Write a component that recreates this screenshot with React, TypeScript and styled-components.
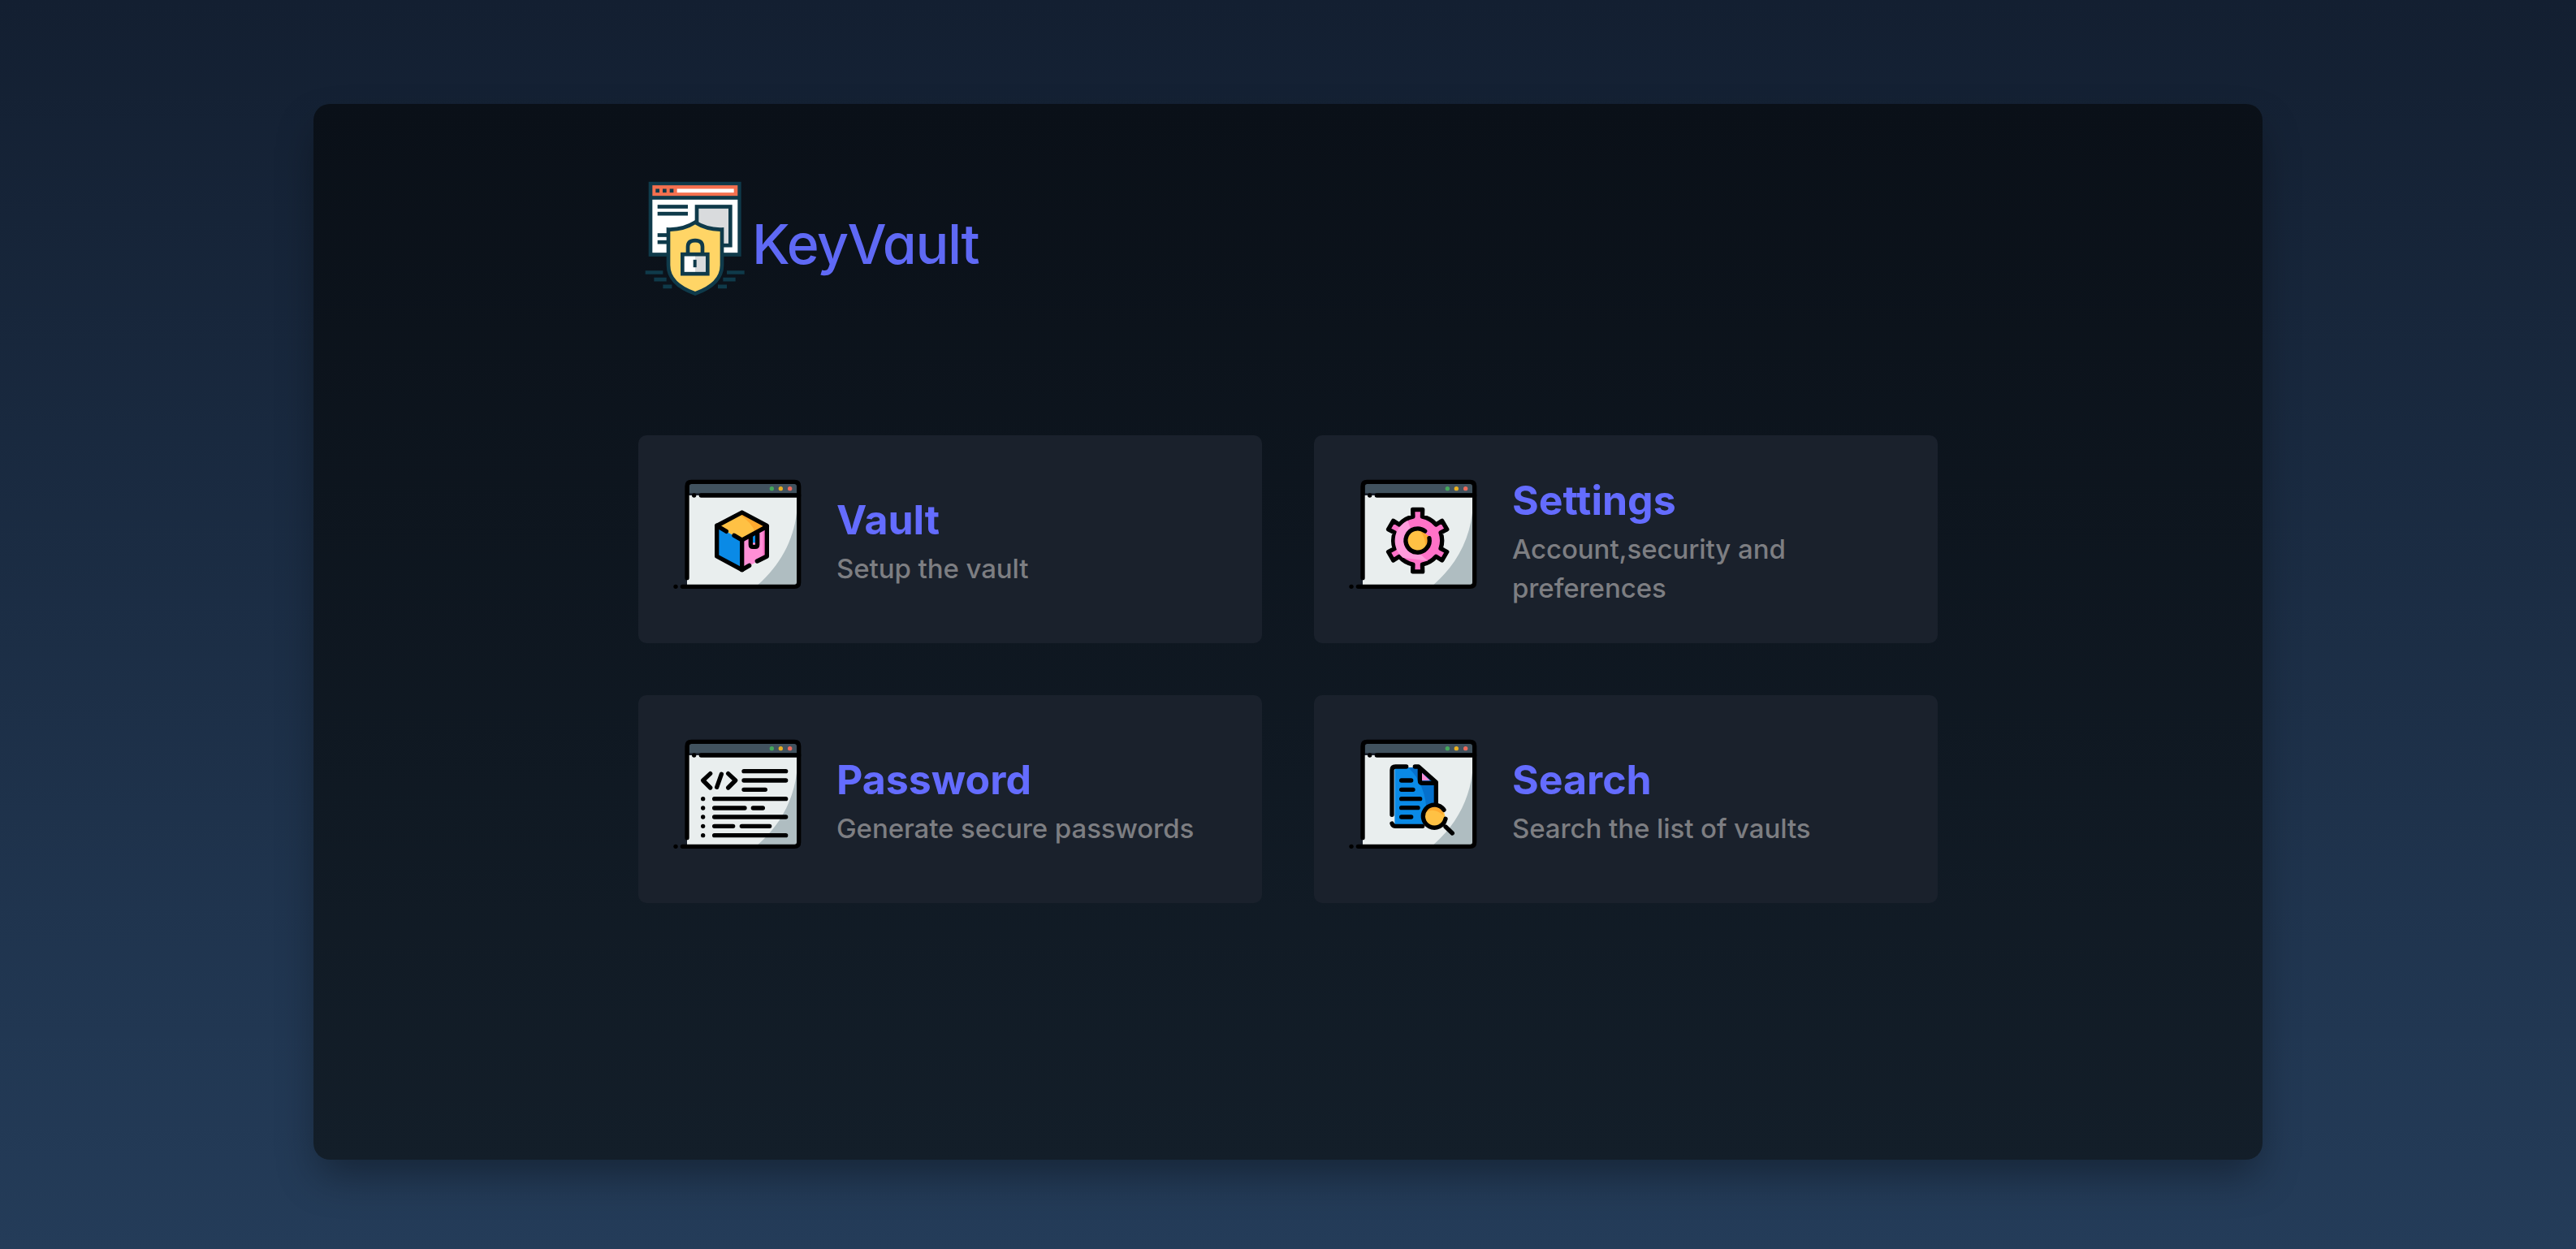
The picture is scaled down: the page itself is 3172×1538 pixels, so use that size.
import React from "react";
import styled, { createGlobalStyle } from "styled-components";

const INK = "#000000";

const GlobalStyle = createGlobalStyle`
  html, body {
    margin: 0;
    padding: 0;
  }
  body {
    font-family: "Inter", "Liberation Sans", sans-serif;
  }
  * {
    box-sizing: border-box;
  }
`;

const Page = styled.div`
  min-height: 1538px;
  padding-top: 128px;
  display: flex;
  justify-content: center;
  background: linear-gradient(180deg, #131f31 0%, #243c59 100%);
`;

const Panel = styled.main`
  width: 2400px;
  height: 1300px;
  padding-top: 95px;
  display: flex;
  justify-content: center;
  border-radius: 20px;
  background: linear-gradient(180deg, #0a1018 0%, #131e29 100%);
  box-shadow: 0 25px 50px -6px rgba(0, 0, 0, 0.35);
`;

const Content = styled.div`
  width: 1600px;
`;

const Brand = styled.header`
  height: 142px;
  padding-left: 7px;
  display: flex;
  align-items: center;
  gap: 8px;
`;

const BrandName = styled.h1`
  margin: 0;
  padding-top: 12px;
  font-family: "Inter", sans-serif;
  font-size: 68px;
  font-weight: 500;
  font-feature-settings: "cv11" 1;
  letter-spacing: -1.4px;
  color: #5f69f5;
`;

const CardGrid = styled.section`
  margin-top: 171px;
  display: grid;
  grid-template-columns: repeat(2, 768px);
  grid-auto-rows: 256px;
  gap: 64px;
`;

const Card = styled.article`
  padding-left: 14px;
  display: flex;
  align-items: center;
  gap: 30px;
  border-radius: 10px;
  background: #1a212c;
`;

const CardIcon = styled.svg`
  flex: none;
  width: 200px;
  height: 190px;
  margin-bottom: 18px;
`;

const CardText = styled.div`
  padding-top: 6px;
`;

const CardTitle = styled.h2`
  margin: 0 0 6px;
  font-size: 50px;
  line-height: 60px;
  font-weight: 700;
  color: #646cff;
`;

const CardSubtitle = styled.p`
  margin: 0;
  max-width: 470px;
  font-size: 33px;
  line-height: 48px;
  font-weight: 500;
  letter-spacing: -0.08px;
  color: #7d7e82;
`;

const Frame = ({ children }: { children?: React.ReactNode }) => (
  <CardIcon viewBox="0 0 600 570">
    <rect x="138" y="150" width="405" height="330" fill="#e9eeee" />
    <path d="M543 215C530 320 480 410 400 480H543Z" fill="#afbdc1" />
    <path d="M147 142V116Q147 108 155 108H535Q543 108 543 116V142Z" fill="#41525e" />
    <circle cx="451" cy="125" r="8" fill="#45a85a" />
    <circle cx="484" cy="125" r="8" fill="#eab020" />
    <circle cx="518" cy="125" r="8" fill="#ee6a5a" />
    {children}
    <g fill="none" stroke={INK} strokeWidth="16" strokeLinecap="round" strokeLinejoin="round">
      <path d="M138 455V116Q138 100 154 100H535Q551 100 551 116V471Q551 487 535 487H121" />
      <path d="M190 150H551" />
    </g>
    <circle cx="96" cy="487" r="8" fill={INK} />
    <circle cx="164" cy="150" r="8" fill={INK} />
  </CardIcon>
);

const Outline = styled.g`
  fill: none;
  stroke: ${INK};
  stroke-width: 16;
  stroke-linecap: round;
  stroke-linejoin: round;
`;

const VaultIcon = () => (
  <Frame>
    <path d="M341 215L433 265L341 315L248 265Z" fill="#ffc144" />
    <path d="M341 215L433 265L390 289Q380 250 330 221Z" fill="#ffa92e" />
    <path d="M248 265L341 315V425L248 375Z" fill="#0a8ae6" />
    <path d="M433 265L341 315V425L433 375Z" fill="#ff8fd6" />
    <path d="M433 265V375L418 383V272Z" fill="#ff72c8" />
    <path d="M380 295H392V325H380Z" fill="#0a8ae6" />
    <Outline>
      <path d="M283 283L248 262V375L341 425L368 409" />
      <path d="M397 393L433 375V262L341 213L248 262" />
      <path d="M312 298L341 315L433 265" />
      <path d="M341 315V425" />
      <path d="M373 300V332Q373 340 381 340H390Q398 340 398 332V292" />
    </Outline>
  </Frame>
);

// six teeth round the wheel, in the coordinates of the 600x570 icon
const gearPath = (() => {
  const cx = 317;
  const cy = 317;
  const polar = (r: number, deg: number) => {
    const a = ((deg - 90) * Math.PI) / 180;
    return `${(cx + r * Math.cos(a)).toFixed(1)} ${(cy + r * Math.sin(a)).toFixed(1)}`;
  };
  let d = "";
  for (let i = 0; i < 6; i++) {
    const a = i * 60;
    d += `${i === 0 ? "M" : "L"}${polar(90, a - 11)}`;
    d += `L${polar(116, a - 9)}L${polar(116, a + 9)}L${polar(90, a + 11)}`;
    d += `A90 90 0 0 1 ${polar(90, a + 49)}`;
  }
  return d + "Z";
})();

const SettingsIcon = () => (
  <Frame>
    <g transform="translate(24 0)">
      <path d={gearPath} fill="#ff72c8" stroke={INK} strokeWidth="16" strokeLinejoin="round" />
      <path d="M280 243A82 82 0 0 0 262 380L355 392Q300 350 300 300Z" fill="#ff9bdc" />
      <circle cx="317" cy="317" r="38" fill="#ffc144" />
      <path d="M325 280L358 300L345 352Q350 310 325 280Z" fill="#ffa92e" />
      <Outline>
        <path d="M344 282A44 44 0 1 0 360 308" />
      </Outline>
    </g>
  </Frame>
);

const PasswordIcon = () => (
  <Frame>
    <Outline>
      <path d="M224 218L197 243L224 270" />
      <path d="M265 220L248 268" />
      <path d="M290 218L317 243L290 270" />
      <path d="M348 209H503M348 243H503M348 277H427" />
      <path d="M239 311H503M239 345H351M382 345H418M239 378H503M239 412H308M340 412H443M239 446H503" />
      <path d="M197 311V311M197 345V345M197 378V378M197 412V412M197 446V446" />
    </Outline>
  </Frame>
);

const SearchIcon = () => (
  <Frame>
    <g transform="translate(24 0)">
      <path d="M232 195H320L382 255V405H232Z" fill="#0a8ae6" />
      <path d="M282 195H320L382 255V340L350 370Q350 260 282 195Z" fill="#0570cc" />
      <path d="M333 215V243H362Z" fill="#ff8fd6" />
      <circle cx="380" cy="378" r="38" fill="#ffc144" />
      <path d="M345 362Q375 340 412 372Q410 345 380 340Q355 340 345 362Z" fill="#ffa92e" />
      <Outline>
        <path d="M275 192H235Q222 192 222 205V370" />
        <path d="M222 402Q225 412 235 412H335" />
        <path d="M307 192H320L385 250V328" />
        <path d="M325 200V243Q325 253 335 253H385" />
        <path d="M257 243H293M257 277H300M257 311H326M257 344H318M257 378H293" />
        <path d="M414 352A42 42 0 1 0 420 385" />
        <path d="M420 414L445 438" />
      </Outline>
    </g>
  </Frame>
);

const LogoMark = styled.svg`
  flex: none;
  width: 125px;
  height: 142px;
`;

const LogoIcon = () => (
  <LogoMark viewBox="70 70 375 425">
    <rect x="87" y="72" width="342" height="276" fill="#0f3a4a" />
    <rect x="101" y="85" width="315" height="39" fill="#f4704f" />
    <rect x="101" y="138" width="315" height="196" fill="#ffffff" />
    <rect x="113" y="98" width="14" height="14" fill="#0f3a4a" />
    <rect x="139" y="98" width="14" height="14" fill="#0f3a4a" />
    <rect x="165" y="98" width="14" height="14" fill="#0f3a4a" />
    <rect x="192" y="98" width="210" height="14" fill="#ffffff" />
    <rect x="120" y="157" width="112" height="14" fill="#0f3a4a" />
    <rect x="120" y="183" width="112" height="14" fill="#0f3a4a" />
    <rect x="120" y="262" width="50" height="14" fill="#0f3a4a" />
    <rect x="120" y="288" width="50" height="14" fill="#0f3a4a" />
    <rect x="265" y="164" width="124" height="143" fill="#d9dbdd" stroke="#0f3a4a" strokeWidth="14" />
    <path
      d="M259 222Q215 250 160 248V380Q160 450 259 485Q358 450 358 380V248Q303 250 259 222Z"
      fill="#ffd566"
      stroke="#0f3a4a"
      strokeWidth="14"
    />
    <path d="M232 340V312Q232 289 259 289Q286 289 286 312V340" fill="none" stroke="#0f3a4a" strokeWidth="14" />
    <rect x="212" y="340" width="47" height="72" fill="#ffffff" />
    <rect x="259" y="340" width="46" height="72" fill="#d9dbdd" />
    <rect x="212" y="340" width="93" height="72" fill="none" stroke="#0f3a4a" strokeWidth="14" />
    <rect x="252" y="360" width="12" height="28" fill="#0f3a4a" />
    <path
      d="M75 407H140M107 433H153M140 459H173M376 407H441M362 433H408M343 459H376"
      stroke="#0f3a4a"
      strokeWidth="14"
      fill="none"
    />
  </LogoMark>
);

const cards = [
  { title: "Vault", text: "Setup the vault", icon: <VaultIcon /> },
  { title: "Settings", text: "Account,security and preferences", icon: <SettingsIcon /> },
  { title: "Password", text: "Generate secure passwords", icon: <PasswordIcon /> },
  { title: "Search", text: "Search the list of vaults", icon: <SearchIcon /> },
];

const App = () => {
  return (
    <Page>
      <GlobalStyle />
      <Panel>
        <Content>
          <Brand>
            <LogoIcon />
            <BrandName>KeyVault</BrandName>
          </Brand>
          <CardGrid>
            {cards.map((card) => (
              <Card key={card.title}>
                {card.icon}
                <CardText>
                  <CardTitle>{card.title}</CardTitle>
                  <CardSubtitle>{card.text}</CardSubtitle>
                </CardText>
              </Card>
            ))}
          </CardGrid>
        </Content>
      </Panel>
    </Page>
  );
};

export default App;
